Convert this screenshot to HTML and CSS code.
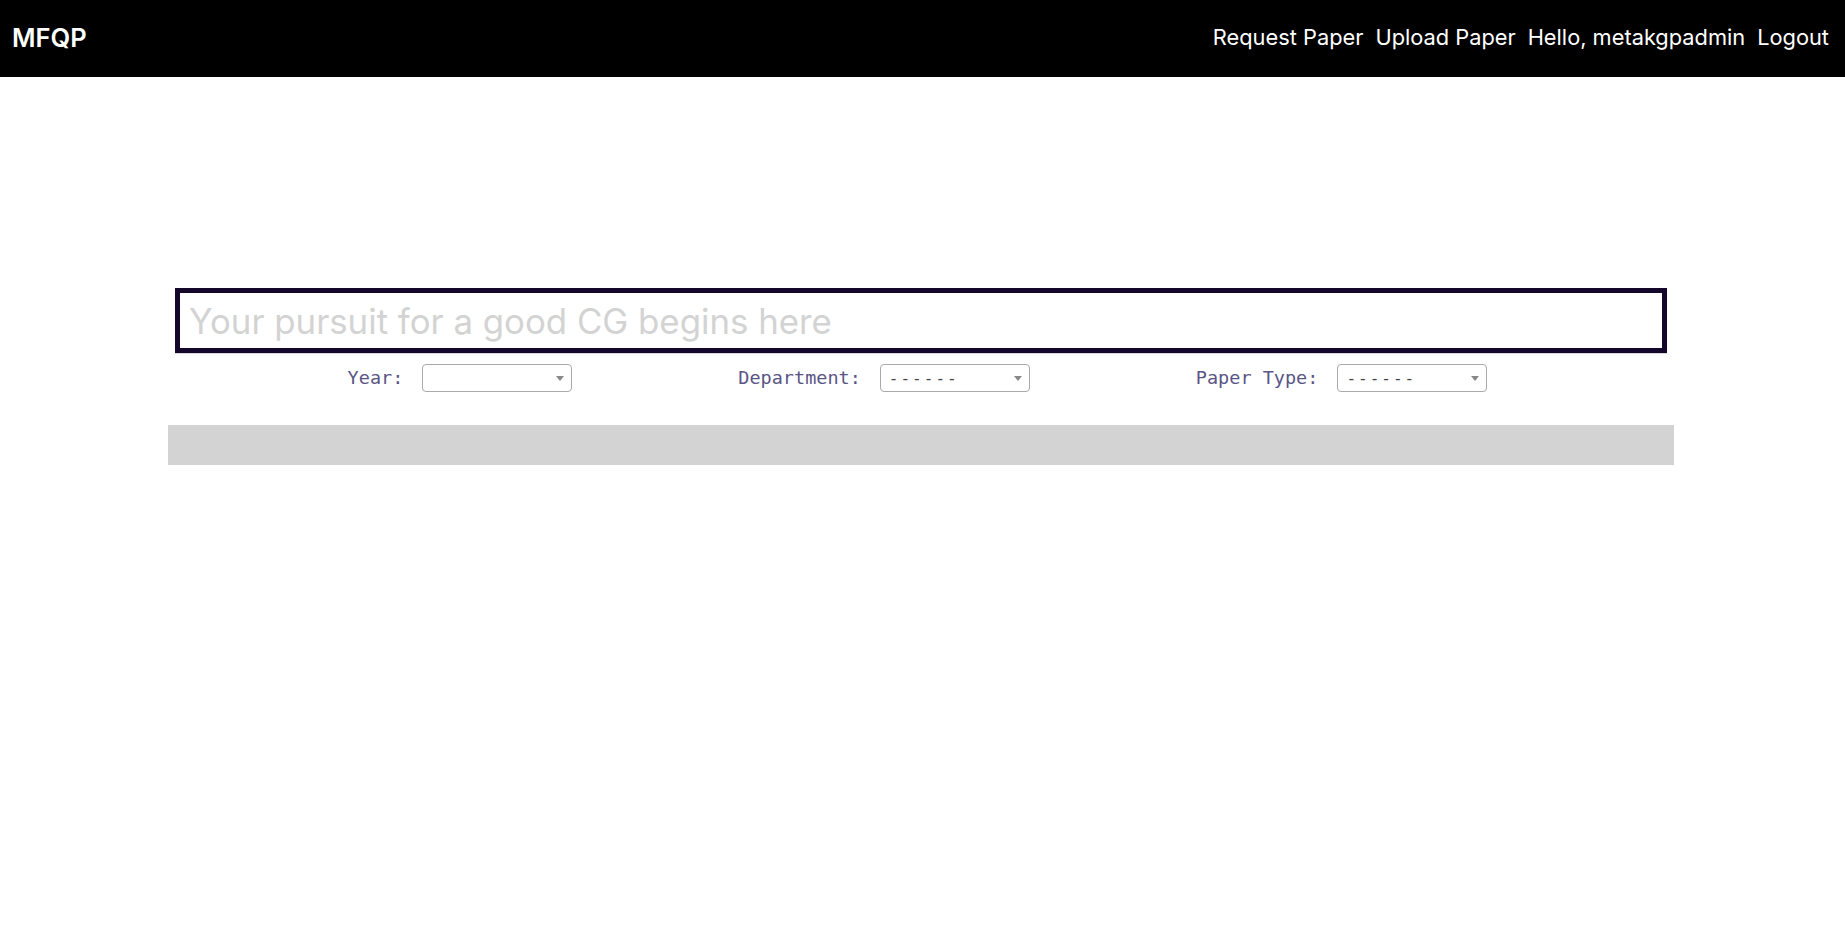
FILE: index.html
```html
<!DOCTYPE html>
<html lang="en">
<head>
<meta charset="utf-8">
<title>MFQP</title>
<link rel="stylesheet" href="styles.css">
</head>
<body>
<header class="topbar">
  <a class="brand" href="#">MFQP</a>
  <nav class="nav">
    <a class="nav-link" href="#">Request Paper</a>
    <a class="nav-link" href="#">Upload Paper</a>
    <span class="nav-link">Hello, metakgpadmin</span>
    <a class="nav-link" href="#">Logout</a>
  </nav>
</header>
<main class="container">
  <div class="search">
    <span class="search-placeholder">Your pursuit for a good CG begins here</span>
  </div>
  <div class="filters">
    <div class="filter">
      <span class="filter-label">Year:</span>
      <span class="select"><span class="select-value"></span><span class="select-arrow"></span></span>
    </div>
    <div class="filter">
      <span class="filter-label">Department:</span>
      <span class="select"><span class="select-value">------</span><span class="select-arrow"></span></span>
    </div>
    <div class="filter">
      <span class="filter-label">Paper Type:</span>
      <span class="select"><span class="select-value">------</span><span class="select-arrow"></span></span>
    </div>
  </div>
  <div class="results"></div>
</main>
</body>
</html>
```
FILE: styles.css
```css
* { box-sizing: border-box; }
html, body { margin: 0; padding: 0; background: #fff; }
body { font-family: Inter, "Noto Sans", sans-serif; }

.topbar {
  height: 77px;
  background: #000;
  display: flex;
  align-items: center;
  justify-content: space-between;
  padding: 0 16px 3px 12px;
}
.brand {
  color: #fff;
  text-decoration: none;
  font-size: 25.5px;
  font-weight: 600;
}
.nav {
  display: flex;
  gap: 12px;
}
.nav-link {
  color: #fff;
  text-decoration: none;
  font-size: 21.8px;
  font-weight: 400;
}

.container {
  width: 1506px;
  margin: 0 171px 0 168px;
  padding-top: 211px;
}
.search {
  margin: 0 7px;
  height: 65px;
  border: 5px solid #14072b;
  box-shadow: 0 1px 0 #d8d8d8;
  display: flex;
  align-items: center;
  padding: 0 9px;
}
.search-placeholder {
  font-size: 34.8px;
  color: #d3d3d3;
  white-space: nowrap;
}
.filters {
  display: flex;
  justify-content: center;
  gap: 166px;
  margin-top: 11px;
  padding-right: 7px;
}
.filter {
  display: flex;
  align-items: center;
  gap: 19px;
}
.filter-label {
  font-family: "DejaVu Sans Mono", monospace;
  font-size: 18.5px;
  color: #5a5585;
  padding-bottom: 1px;
}
.select {
  position: relative;
  width: 150px;
  height: 28px;
  border: 1px solid #aaa;
  border-radius: 4px;
  background: #fff;
  display: flex;
  align-items: center;
  padding-left: 8px;
}
.select-value {
  font-family: "DejaVu Sans Mono", monospace;
  font-size: 16px;
  color: #444;
  letter-spacing: 2px;
}
.select-arrow {
  position: absolute;
  right: 7px;
  top: 11px;
  width: 0;
  height: 0;
  border-style: solid;
  border-width: 5px 4px 0 4px;
  border-color: #888 transparent transparent transparent;
}
.results {
  margin-top: 33px;
  height: 40px;
  background: #d3d3d3;
}
```
